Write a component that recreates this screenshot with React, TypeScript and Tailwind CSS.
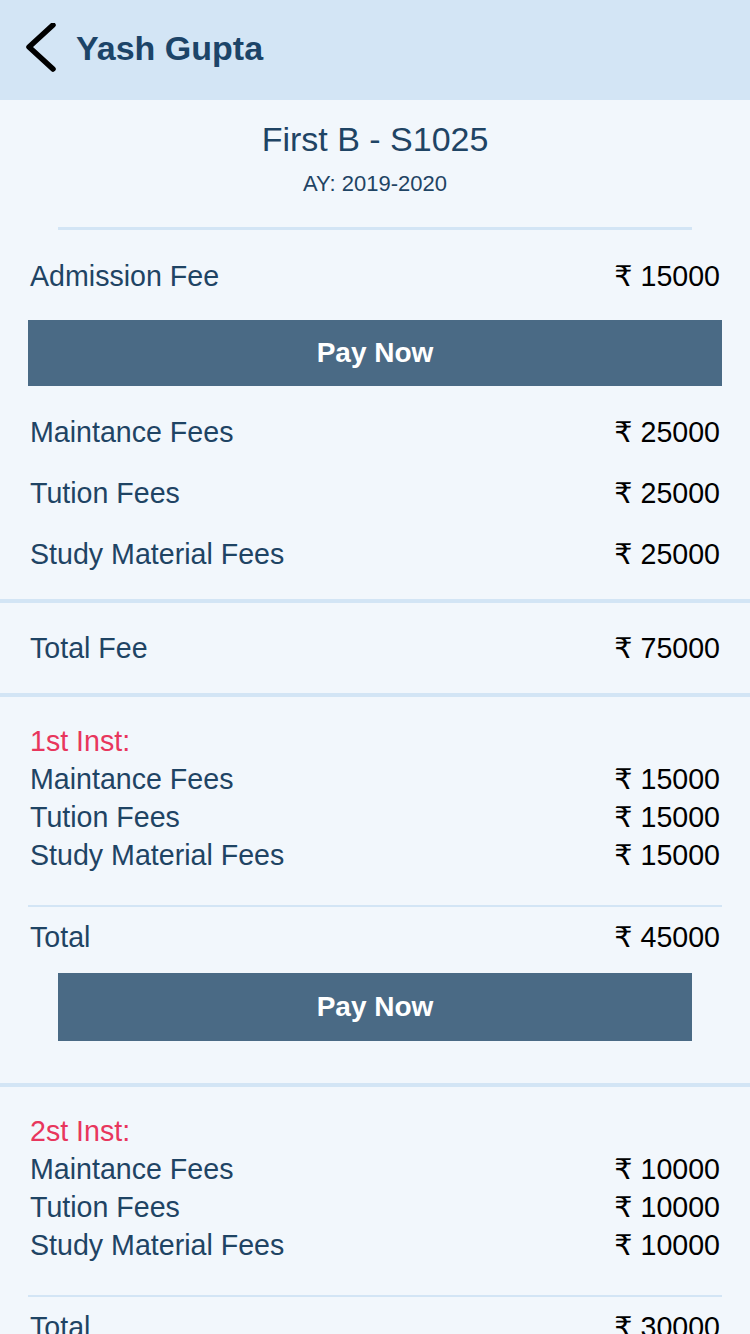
import React from 'react';

const font = { fontFamily: '"Liberation Sans", "DejaVu Sans", Arial, sans-serif' };

type Item = { label: string; amount: string };

function Amount({ value }: { value: string }) {
  return <span className="text-black">₹ {value}</span>;
}

function Row({ label, amount, h }: { label: string; amount: string; h: string }) {
  return (
    <div className={`flex items-center justify-between px-[30px] ${h}`}>
      <span className="text-[#1f4464]">{label}</span>
      <Amount value={amount} />
    </div>
  );
}

function Installment({ title, items, total }: { title: string; items: Item[]; total: string }) {
  return (
    <div className="pt-[25px]">
      <div className="px-[30px] h-[38px] flex items-center text-[#e8365d]">{title}</div>
      {items.map((it) => (
        <Row key={it.label} label={it.label} amount={it.amount} h="h-[38px]" />
      ))}
      <div className="mx-[28px] mt-[31px] h-[2px] bg-[#d3e5f5]" />
      <Row label="Total" amount={total} h="h-[60px]" />
    </div>
  );
}

export default function App() {
  return (
    <div className="w-[750px] min-h-[1334px] bg-[#f2f7fc] text-[28.6px]" style={font}>
      <header className="h-[100px] bg-[#d3e5f5] flex items-center pb-[5px]">
        <svg width="76" height="50" viewBox="0 0 76 50" className="shrink-0">
          <polyline
            points="53,2 29,24 53,46"
            fill="none"
            stroke="#000"
            strokeWidth="5.5"
            strokeLinecap="round"
            strokeLinejoin="round"
          />
        </svg>
        <h1 className="text-[34px] font-bold text-[#1c4468] leading-none">Yash Gupta</h1>
      </header>

      <div className="pt-[19px] text-center text-[#1f4464]">
        <div className="text-[34px] leading-[40px]">First B - S1025</div>
        <div className="mt-[12px] text-[22px] leading-[26px]">AY: 2019-2020</div>
      </div>
      <div className="mx-[58px] mt-[30px] h-[3px] bg-[#d3e5f5]" />

      <div className="mt-[16px]">
        <Row label="Admission Fee" amount="15000" h="h-[60px]" />
      </div>
      <div className="px-[28px] mt-[14px]">
        <button className="w-full h-[66px] bg-[#4a6a85] text-white font-bold text-[28px]">Pay Now</button>
      </div>

      <div className="mt-[16px]">
        <Row label="Maintance Fees" amount="25000" h="h-[61px]" />
        <Row label="Tution Fees" amount="25000" h="h-[61px]" />
        <Row label="Study Material Fees" amount="25000" h="h-[61px]" />
      </div>
      <div className="mt-[14px] h-[4px] bg-[#d3e5f5]" />
      <Row label="Total Fee" amount="75000" h="h-[90px]" />
      <div className="h-[4px] bg-[#d3e5f5]" />

      <Installment
        title="1st Inst:"
        items={[
          { label: 'Maintance Fees', amount: '15000' },
          { label: 'Tution Fees', amount: '15000' },
          { label: 'Study Material Fees', amount: '15000' },
        ]}
        total="45000"
      />
      <div className="px-[58px] mt-[6px] pb-[42px]">
        <button className="w-full h-[68px] bg-[#4a6a85] text-white font-bold text-[28px]">Pay Now</button>
      </div>
      <div className="h-[4px] bg-[#d3e5f5]" />

      <Installment
        title="2st Inst:"
        items={[
          { label: 'Maintance Fees', amount: '10000' },
          { label: 'Tution Fees', amount: '10000' },
          { label: 'Study Material Fees', amount: '10000' },
        ]}
        total="30000"
      />
    </div>
  );
}
